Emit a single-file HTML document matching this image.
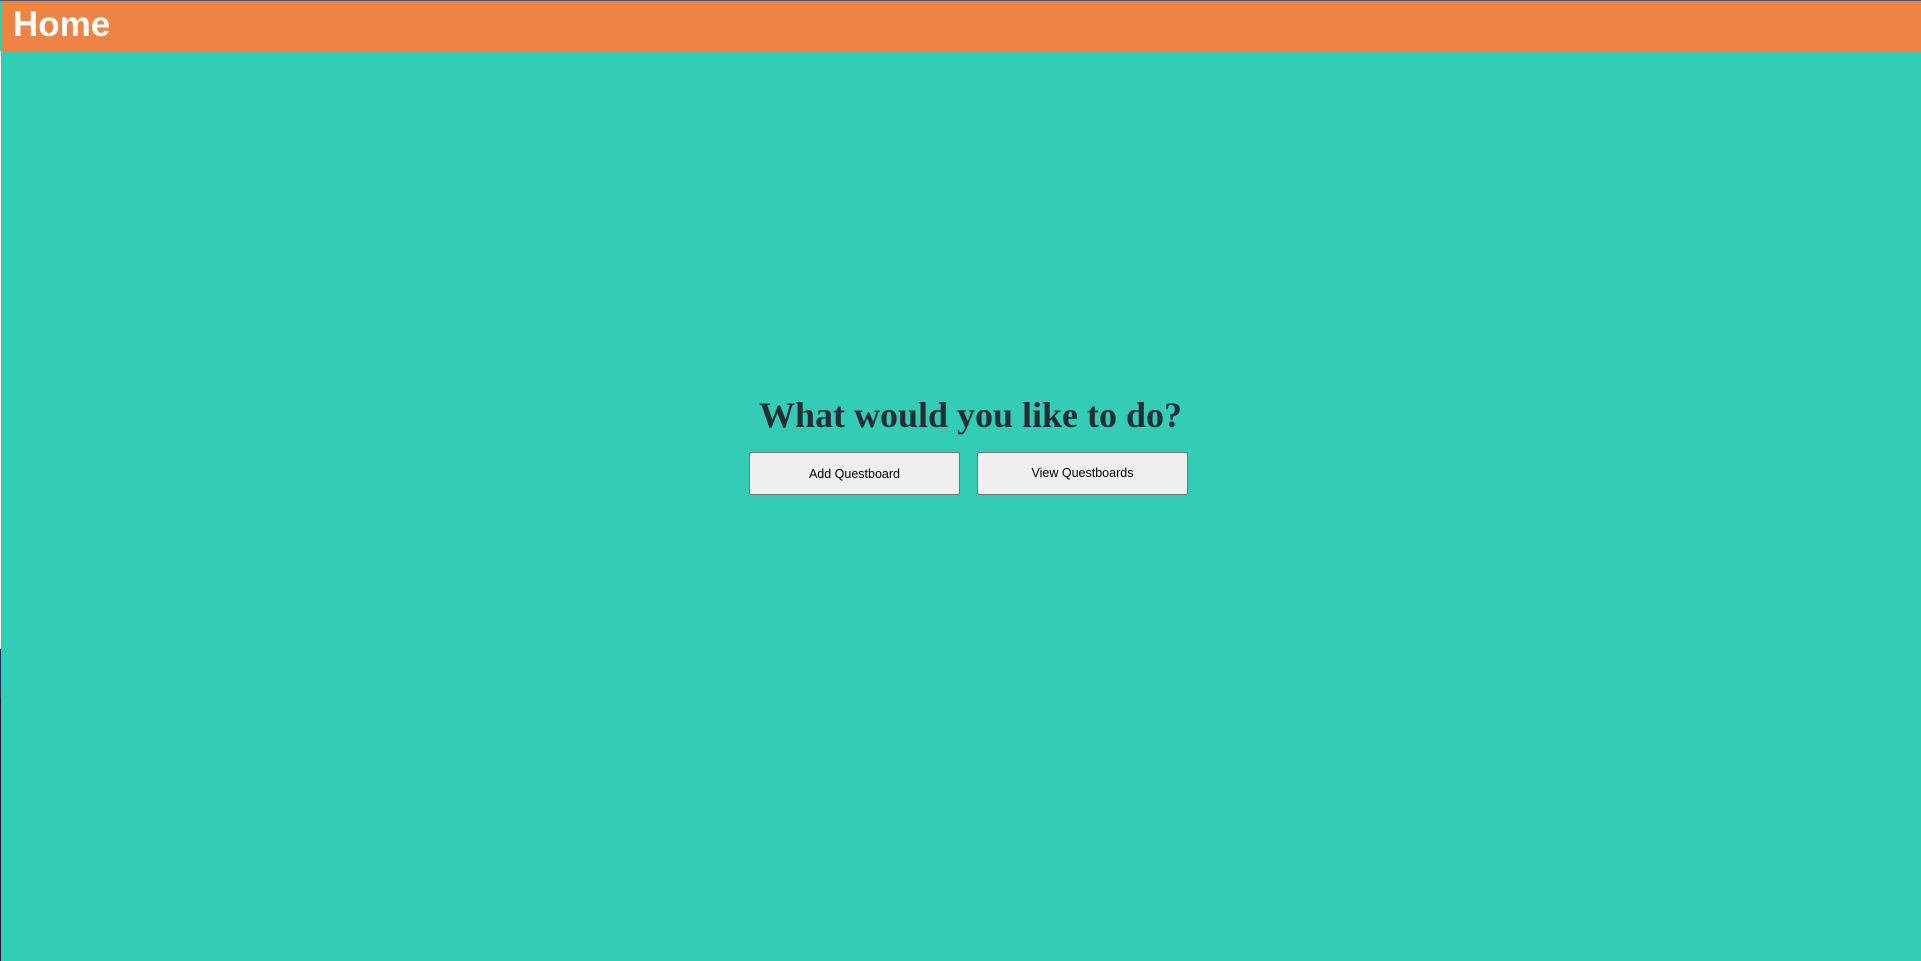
<!DOCTYPE html>
<html><head><meta charset="utf-8"><style>
html,body{margin:0;padding:0;width:1921px;height:961px;overflow:hidden;background:#33cdb5;position:relative;font-family:"Liberation Sans",Arial,sans-serif}
.topline{position:absolute;left:0;top:0;width:1921px;height:1px;background:#555}
.hdr{position:absolute;left:1px;top:1px;width:1920px;height:50px;background:#ed8345}
.hdr span{position:absolute;left:12px;top:4px;color:#fff;font-weight:bold;font-size:35px;line-height:40px}
.edge1{position:absolute;left:0;top:51px;width:1px;height:598px;background:#fff}
.edge2{position:absolute;left:0;top:649px;width:1px;height:48px;background:#1b2f5a}
.edge3{position:absolute;left:0;top:697px;width:1px;height:264px;background:#1a1f2a}
h1{position:absolute;left:10px;width:1921px;top:395px;margin:0;text-align:center;font-family:"Liberation Serif","Times New Roman",serif;font-weight:bold;font-size:36px;line-height:40px;color:#232d37}
.btn{position:absolute;top:452px;width:209px;height:41px;background:#efefef;border:1px solid #767676;border-radius:2px;font-size:12.5px;color:#000;text-align:center;line-height:41px}
</style></head><body>
<div class="topline"></div>
<div class="hdr"><span>Home</span></div>
<div class="edge1"></div><div class="edge2"></div><div class="edge3"></div>
<h1>What would you like to do?</h1>
<div class="btn" style="left:749px;line-height:43px">Add Questboard</div>
<div class="btn" style="left:977px">View Questboards</div>
</body></html>
